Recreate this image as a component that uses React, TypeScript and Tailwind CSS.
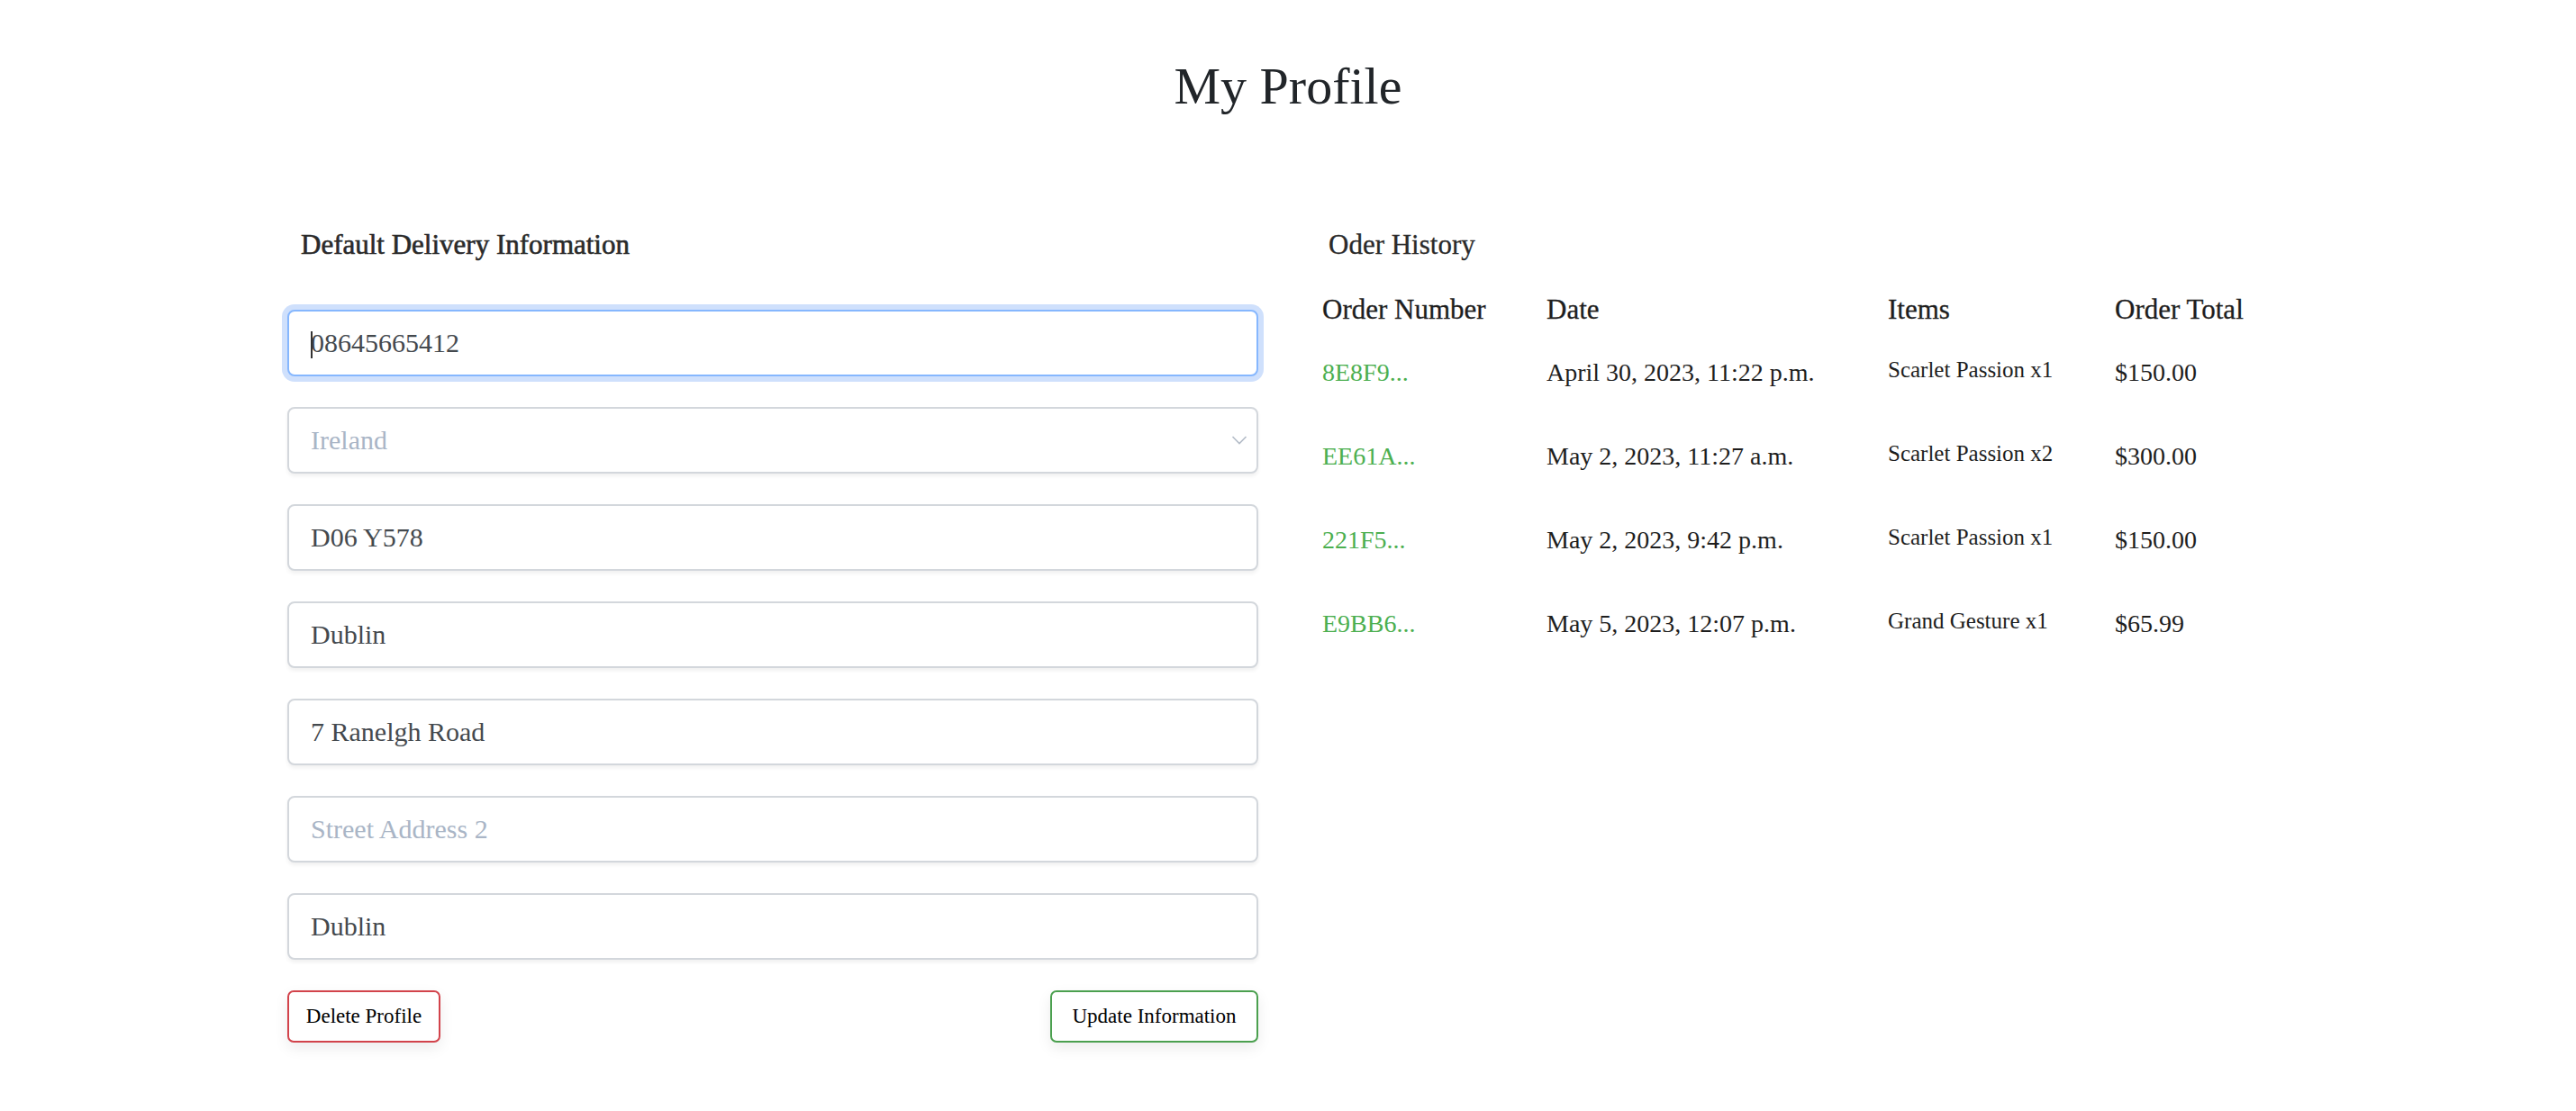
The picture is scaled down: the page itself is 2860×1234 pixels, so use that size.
import React from "react";

const serif = { fontFamily: '"Liberation Serif", "DejaVu Serif", serif' };

function Field({ value, placeholder, focused, select }: { value?: string; placeholder?: string; focused?: boolean; select?: boolean }) {
  return (
    <div
      className={
        "relative h-[74px] w-full rounded-[8px] bg-white flex items-center pl-[24px] pr-[24px] " +
        (focused
          ? "border-2 border-[#86b7fe] shadow-[0_0_0_6px_#cfe0fc]"
          : "border-2 border-[#d3d7dc] shadow-[0_3px_4px_rgba(0,0,0,0.06)]")
      }
    >
      {focused && <span className="absolute left-[24px] top-[22px] h-[30px] w-[1.5px] bg-[#333]" />}
      <span className={"text-[30px] leading-none " + (value ? "text-[#44494e]" : "text-[#a9b5c6]")}>
        {value ?? placeholder}
      </span>
      {select && (
        <svg className="absolute right-[10px] top-[29px]" width="18" height="12" viewBox="0 0 18 12" fill="none">
          <path d="M1.5 2L9 9.5L16.5 2" stroke="#b4bcc8" strokeWidth="1.6" />
        </svg>
      )}
    </div>
  );
}

const orders = [
  { id: "8E8F9...", date: "April 30, 2023, 11:22 p.m.", items: "Scarlet Passion x1", total: "$150.00" },
  { id: "EE61A...", date: "May 2, 2023, 11:27 a.m.", items: "Scarlet Passion x2", total: "$300.00" },
  { id: "221F5...", date: "May 2, 2023, 9:42 p.m.", items: "Scarlet Passion x1", total: "$150.00" },
  { id: "E9BB6...", date: "May 5, 2023, 12:07 p.m.", items: "Grand Gesture x1", total: "$65.99" },
];

export default function App() {
  return (
    <div className="w-[2860px] h-[1234px] bg-white text-[#212529]" style={serif}>
      <h1 className="pt-[61px] h-[128px] text-center text-[58px] leading-[70px] text-[#212529]">My Profile</h1>
      <div className="flex pl-[319px] pt-[126px]">
        <div className="w-[1078px] flex flex-col">
          <h2 className="h-[36px] pl-[15px] text-[31px] leading-[36px] text-[#2a2a2a] [-webkit-text-stroke:0.6px_#2a2a2a]">Default Delivery Information</h2>
          <div className="mt-[54px] flex flex-col gap-[34px]">
            <Field value="08645665412" focused />
            <Field placeholder="Ireland" select />
            <Field value="D06 Y578" />
            <Field value="Dublin" />
            <Field value="7 Ranelgh Road" />
            <Field placeholder="Street Address 2" />
            <Field value="Dublin" />
          </div>
          <div className="mt-[34px] flex justify-between">
            <button className="h-[58px] w-[170px] rounded-[7px] border-2 border-[#d2434b] bg-white text-[23px] text-black shadow-[0_6px_16px_rgba(0,0,0,0.08)]">
              Delete Profile
            </button>
            <button className="h-[58px] w-[231px] rounded-[7px] border-2 border-[#4ba04f] bg-white text-[23px] text-black shadow-[0_6px_16px_rgba(0,0,0,0.08)]">
              Update Information
            </button>
          </div>
        </div>
        <div className="ml-[71px] flex-1 flex flex-col">
          <h2 className="h-[36px] pl-[7px] text-[31px] leading-[36px] text-[#2a2a2a] [-webkit-text-stroke:0.3px_#2a2a2a]">Oder History</h2>
          <div className="mt-[36px]">
            <div className="grid grid-cols-[249px_379px_252px_1fr] h-[70px] text-[31px] leading-[35px] text-[#1e1e1e] [-webkit-text-stroke:0.3px_#1e1e1e]">
              <div>Order Number</div>
              <div>Date</div>
              <div>Items</div>
              <div>Order Total</div>
            </div>
            {orders.map((o) => (
              <div key={o.id} className="grid grid-cols-[249px_379px_252px_1fr] h-[93px] items-start">
                <div className="text-[28px] leading-[35px] text-[#4caf50]">{o.id}</div>
                <div className="text-[28px] leading-[35px] text-[#1e1e1e]">{o.date}</div>
                <div className="text-[25px] leading-[30px] text-[#1e1e1e]">{o.items}</div>
                <div className="text-[28px] leading-[35px] text-[#1e1e1e]">{o.total}</div>
              </div>
            ))}
          </div>
        </div>
      </div>
    </div>
  );
}
